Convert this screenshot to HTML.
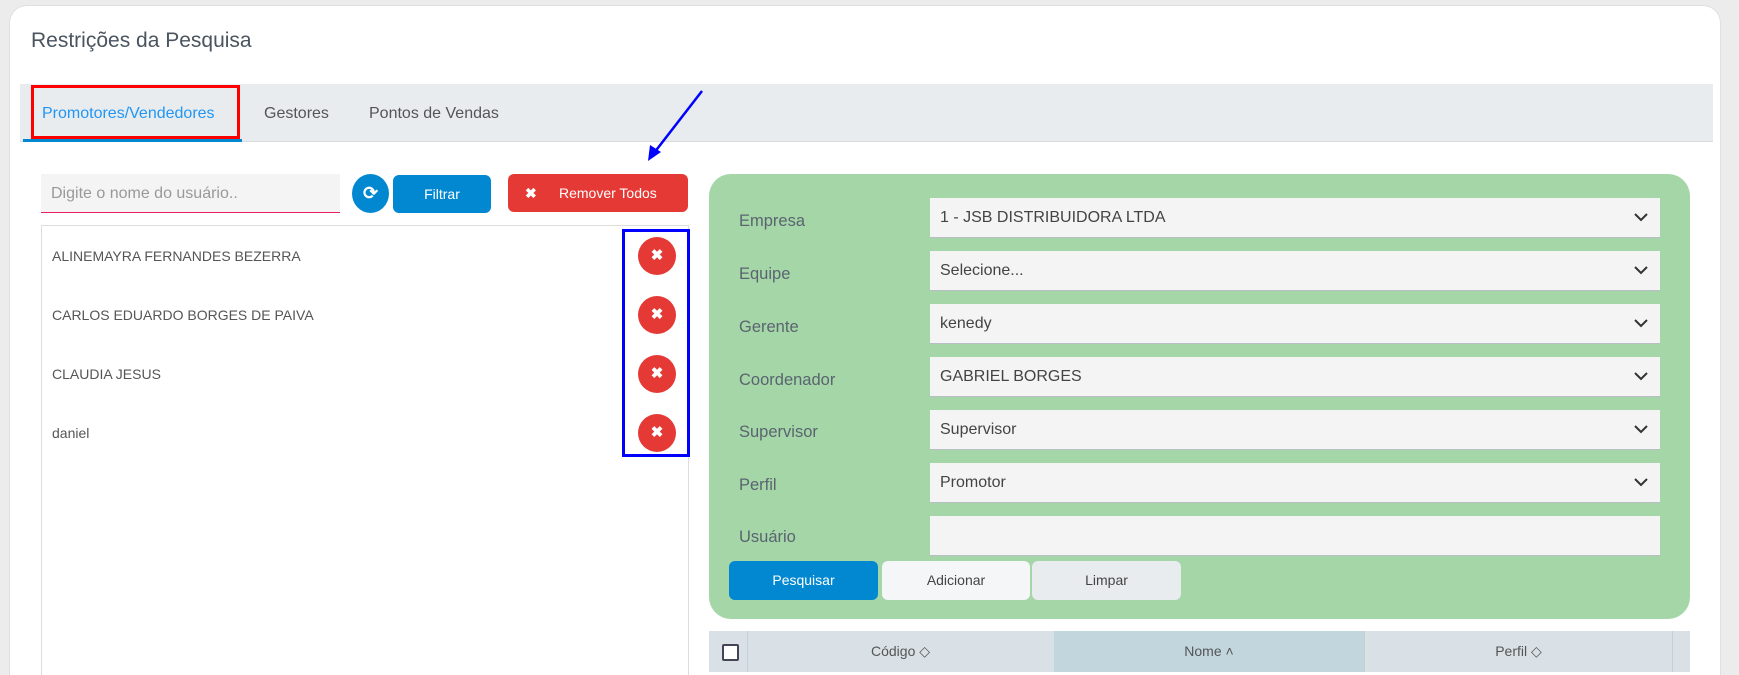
<!DOCTYPE html><html><head><meta charset="utf-8"><style>
*{box-sizing:border-box;margin:0;padding:0}
html{width:1739px;height:675px;overflow:hidden}
body{width:1739px;height:675px;overflow:hidden;background:#ececec;font-family:"Liberation Sans",sans-serif;color:#555;position:relative}
.a{position:absolute}
.card{left:9px;top:5px;width:1712px;height:670px;background:#fff;border-radius:18px 18px 0 0;border:1px solid #e0e0e0;border-bottom:none}
.sel{position:absolute;left:930px;width:730px;height:40px;background:#f4f4f4;border-bottom:1px solid #b8bec4;font-size:16px;color:#444;padding:11px 10px}
.sel svg{position:absolute;right:12px;top:15px}
.lbl{position:absolute;left:739px;font-size:16.5px;color:#5a6470}
.item{position:absolute;left:52px;font-size:14px;color:#555}
.xb{position:absolute;left:638px;width:38px;height:38px;border-radius:50%;background:#e53935;color:#fff;font-size:15px;font-weight:bold;text-align:center;line-height:38px}
.btn{position:absolute;top:561px;height:39px;border-radius:6px;font-size:14px;text-align:center;line-height:39px}
.th{position:absolute;top:631px;height:41px;font-size:14px;color:#555;text-align:center;line-height:41px}
</style></head><body>
<div class="a card"></div>
<div class="a" style="left:31px;top:29px;font-size:21px;color:#4a5560">Restrições da Pesquisa</div>
<div class="a" style="left:20px;top:84px;width:1693px;height:58px;background:#e9ecef;border-bottom:1px solid #d8dbde"></div>
<div class="a" style="left:23px;top:139px;width:219px;height:3px;background:#0288d1"></div>
<div class="a" style="left:31px;top:85px;width:209px;height:54px;border:3px solid #f00"></div>
<div class="a" style="left:42px;top:105px;font-size:16px;color:#2196f3">Promotores/Vendedores</div>
<div class="a" style="left:264px;top:105px;font-size:16px;color:#555">Gestores</div>
<div class="a" style="left:369px;top:105px;font-size:16px;color:#555">Pontos de Vendas</div>
<svg class="a" style="left:640px;top:85px" width="70" height="80"><line x1="62" y1="6" x2="14" y2="68" stroke="#0000ff" stroke-width="2.5"/><polygon points="8,76 10,60 21,67" fill="#0000ff"/></svg>
<div class="a" style="left:41px;top:174px;width:299px;height:39px;background:#f4f4f4;border-bottom:1px solid #e91e63;font-size:16px;color:#999;padding:11px 10px">Digite o nome do usuário..</div>
<div class="a" style="left:352px;top:174px;width:37px;height:39px;border-radius:50%;background:#0288d1;color:#fff;text-align:center;line-height:39px;font-size:18px;font-weight:bold">⟳</div>
<div class="a" style="left:393px;top:175px;width:98px;height:38px;border-radius:6px;background:#0288d1;color:#fff;text-align:center;line-height:38px;font-size:14px">Filtrar</div>
<div class="a" style="left:508px;top:174px;width:180px;height:38px;border-radius:6px;background:#e53935;color:#fff;line-height:38px;font-size:14px"><b style="position:absolute;left:17px">✖</b><span style="position:absolute;left:51px">Remover Todos</span></div>
<div class="a" style="left:41px;top:225px;width:648px;height:460px;border:1px solid #ddd"></div>
<div class="item" style="top:248px">ALINEMAYRA FERNANDES BEZERRA</div>
<div class="item" style="top:307px">CARLOS EDUARDO BORGES DE PAIVA</div>
<div class="item" style="top:366px">CLAUDIA JESUS</div>
<div class="item" style="top:425px">daniel</div>
<div class="xb" style="top:237px">✖</div><div class="xb" style="top:296px">✖</div><div class="xb" style="top:355px">✖</div><div class="xb" style="top:414px">✖</div>
<div class="a" style="left:622px;top:229px;width:68px;height:228px;border:3px solid #0000ff"></div>
<div class="a" style="left:709px;top:174px;width:981px;height:445px;background:#a5d6a7;border-radius:22px"></div>
<div class="lbl" style="top:212px">Empresa</div><div class="lbl" style="top:265px">Equipe</div><div class="lbl" style="top:318px">Gerente</div><div class="lbl" style="top:371px">Coordenador</div><div class="lbl" style="top:423px">Supervisor</div><div class="lbl" style="top:476px">Perfil</div><div class="lbl" style="top:528px">Usuário</div>
<div class="sel" style="top:198px">1 - JSB DISTRIBUIDORA LTDA<svg width="14" height="9"><path d="M1 1l6 6 6-6" stroke="#333" stroke-width="2" fill="none"/></svg></div>
<div class="sel" style="top:251px">Selecione...<svg width="14" height="9"><path d="M1 1l6 6 6-6" stroke="#333" stroke-width="2" fill="none"/></svg></div>
<div class="sel" style="top:304px">kenedy<svg width="14" height="9"><path d="M1 1l6 6 6-6" stroke="#333" stroke-width="2" fill="none"/></svg></div>
<div class="sel" style="top:357px">GABRIEL BORGES<svg width="14" height="9"><path d="M1 1l6 6 6-6" stroke="#333" stroke-width="2" fill="none"/></svg></div>
<div class="sel" style="top:410px">Supervisor<svg width="14" height="9"><path d="M1 1l6 6 6-6" stroke="#333" stroke-width="2" fill="none"/></svg></div>
<div class="sel" style="top:463px">Promotor<svg width="14" height="9"><path d="M1 1l6 6 6-6" stroke="#333" stroke-width="2" fill="none"/></svg></div>
<div class="sel" style="top:516px"></div>
<div class="btn" style="left:729px;width:149px;background:#0288d1;color:#fff">Pesquisar</div>
<div class="btn" style="left:882px;width:148px;background:#f5f6f8;color:#444">Adicionar</div>
<div class="btn" style="left:1032px;width:149px;background:#e9ecef;color:#444">Limpar</div>
<div class="a" style="left:709px;top:631px;width:981px;height:44px;background:#dae1e6"></div>
<div class="a" style="left:722px;top:644px;width:17px;height:17px;border:2px solid #445;background:#fff;border-radius:2px"></div>
<div class="a" style="left:747px;top:631px;width:1px;height:44px;background:#c8d0d6"></div>
<div class="th" style="left:747px;width:307px">Código ◇</div>
<div class="th" style="left:1054px;width:310px;background:#c2d6de">Nome ˄</div>
<div class="th" style="left:1364px;width:309px;border-left:1px solid #c8d0d6;border-right:1px solid #c8d0d6">Perfil ◇</div>
<div class="a" style="left:709px;top:672px;width:981px;height:3px;background:#fff"></div>
</body></html>
